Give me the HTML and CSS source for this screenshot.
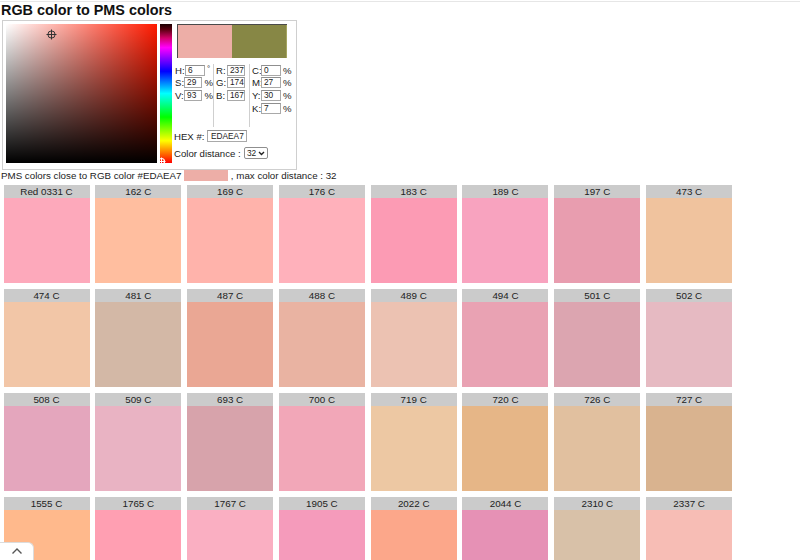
FILE: index.html
```html
<!DOCTYPE html>
<html>
<head>
<meta charset="utf-8">
<link rel="stylesheet" href="styles.css">
</head>
<body>
<div class="page">
  <h1 class="title">RGB color to PMS colors</h1>
  <div class="picker">
    <div class="sv">
      <svg class="cross" width="11" height="11" viewBox="0 0 11 11"><circle cx="5.5" cy="5.5" r="3.6" fill="none" stroke="#333" stroke-width="1"/><path d="M5.5 0.5V10.5M0.5 5.5H10.5" stroke="#333" stroke-width="1"/></svg>
    </div>
    <div class="hue">
      <svg class="huemark" width="9" height="9" viewBox="0 0 9 9"><circle cx="4.5" cy="4.5" r="3" fill="none" stroke="#fff" stroke-width="1.2"/><path d="M4.5 0.5V8.5M0.5 4.5H8.5" stroke="#fff" stroke-width="1"/></svg>
    </div>
    <div class="panel">
      <div class="preview"><div class="cur"></div><div class="old"></div></div>
      <div class="fields">
        <div class="col c1">
          <div class="row"><span class="lab">H:</span><span class="inp w20">6</span><span class="unit deg">°</span></div>
          <div class="row"><span class="lab">S:</span><span class="inp w20">29</span><span class="unit">%</span></div>
          <div class="row"><span class="lab">V:</span><span class="inp w20">93</span><span class="unit">%</span></div>
        </div>
        <div class="col c2">
          <div class="row"><span class="lab">R:</span><span class="inp w18">237</span></div>
          <div class="row"><span class="lab">G:</span><span class="inp w18">174</span></div>
          <div class="row"><span class="lab">B:</span><span class="inp w18">167</span></div>
        </div>
        <div class="col c3">
          <div class="row"><span class="lab l3">C:</span><span class="inp w20">0</span><span class="unit">%</span></div>
          <div class="row"><span class="lab l3">M:</span><span class="inp w20">27</span><span class="unit">%</span></div>
          <div class="row"><span class="lab l3">Y:</span><span class="inp w20">30</span><span class="unit">%</span></div>
          <div class="row"><span class="lab l3">K:</span><span class="inp w20">7</span><span class="unit">%</span></div>
        </div>
      </div>
      <div class="hexrow"><span class="hexlab">HEX #:</span><span class="inp hexinp">EDAEA7</span></div>
      <div class="distrow"><span class="distlab">Color distance :</span><span class="sel">32<svg width="7" height="5" viewBox="0 0 7 5"><path d="M1 1L3.5 3.5L6 1" fill="none" stroke="#222" stroke-width="1.4"/></svg></span></div>
    </div>
  </div>
  <div class="info">PMS colors close to RGB color #EDAEA7 <span class="chip"></span> , max color distance : 32</div>
  <div class="grid">
    <div class="card"><div class="name">Red 0331 C</div><div class="sw" style="background:#FDA9BB"></div></div>
    <div class="card"><div class="name">162 C</div><div class="sw" style="background:#FFBE9F"></div></div>
    <div class="card"><div class="name">169 C</div><div class="sw" style="background:#FFB3AB"></div></div>
    <div class="card"><div class="name">176 C</div><div class="sw" style="background:#FFB1BB"></div></div>
    <div class="card"><div class="name">183 C</div><div class="sw" style="background:#FC9BB4"></div></div>
    <div class="card"><div class="name">189 C</div><div class="sw" style="background:#F8A3BF"></div></div>
    <div class="card"><div class="name">197 C</div><div class="sw" style="background:#E89DAF"></div></div>
    <div class="card"><div class="name">473 C</div><div class="sw" style="background:#F0C39E"></div></div>
    <div class="card"><div class="name">474 C</div><div class="sw" style="background:#F2C6A7"></div></div>
    <div class="card"><div class="name">481 C</div><div class="sw" style="background:#D3B8A6"></div></div>
    <div class="card"><div class="name">487 C</div><div class="sw" style="background:#EAA794"></div></div>
    <div class="card"><div class="name">488 C</div><div class="sw" style="background:#E9B3A2"></div></div>
    <div class="card"><div class="name">489 C</div><div class="sw" style="background:#ECC2B2"></div></div>
    <div class="card"><div class="name">494 C</div><div class="sw" style="background:#E9A2B3"></div></div>
    <div class="card"><div class="name">501 C</div><div class="sw" style="background:#DCA5B0"></div></div>
    <div class="card"><div class="name">502 C</div><div class="sw" style="background:#E6BAC2"></div></div>
    <div class="card"><div class="name">508 C</div><div class="sw" style="background:#E4A6BD"></div></div>
    <div class="card"><div class="name">509 C</div><div class="sw" style="background:#E9B3C3"></div></div>
    <div class="card"><div class="name">693 C</div><div class="sw" style="background:#D7A3AB"></div></div>
    <div class="card"><div class="name">700 C</div><div class="sw" style="background:#F2A7B8"></div></div>
    <div class="card"><div class="name">719 C</div><div class="sw" style="background:#EDC8A3"></div></div>
    <div class="card"><div class="name">720 C</div><div class="sw" style="background:#E6B687"></div></div>
    <div class="card"><div class="name">726 C</div><div class="sw" style="background:#E1C09F"></div></div>
    <div class="card"><div class="name">727 C</div><div class="sw" style="background:#D9B38F"></div></div>
    <div class="card"><div class="name">1555 C</div><div class="sw" style="background:#FFB98C"></div></div>
    <div class="card"><div class="name">1765 C</div><div class="sw" style="background:#FF9FB2"></div></div>
    <div class="card"><div class="name">1767 C</div><div class="sw" style="background:#FAAFC2"></div></div>
    <div class="card"><div class="name">1905 C</div><div class="sw" style="background:#F59BBB"></div></div>
    <div class="card"><div class="name">2022 C</div><div class="sw" style="background:#FCA78A"></div></div>
    <div class="card"><div class="name">2044 C</div><div class="sw" style="background:#E691B5"></div></div>
    <div class="card"><div class="name">2310 C</div><div class="sw" style="background:#D8C1A8"></div></div>
    <div class="card"><div class="name">2337 C</div><div class="sw" style="background:#F7BDB5"></div></div>
  </div>
</div>
<div class="totop"><svg width="12" height="8" viewBox="0 0 12 8"><path d="M1.5 6.5L6 2L10.5 6.5" fill="none" stroke="#555" stroke-width="1.4"/></svg></div>
</body>
</html>
```

FILE: styles.css
```css
html, body {
  margin: 0;
  padding: 0;
  background: #fff;
}
body {
  font-family: "Liberation Sans", Arial, sans-serif;
  font-size: 9.6px;
  color: #222;
  overflow: hidden;
}
.page {
  margin-top: 1px;
  border-top: 1px solid #e6e6e6;
}
.title {
  margin: 0;
  padding-left: 1px;
  height: 18px;
  font-size: 14.4px;
  line-height: 17px;
  font-weight: bold;
  color: #111;
}
.picker {
  display: flex;
  box-sizing: border-box;
  width: 295px;
  height: 150px;
  margin-left: 2px;
  border: 1px solid #cfcfcf;
  padding: 3px 0 0 3px;
}
.sv {
  position: relative;
  width: 151px;
  height: 139px;
  background:
    linear-gradient(to bottom, rgba(0,0,0,0), #000),
    linear-gradient(to right, #fff, rgba(255,255,255,0)),
    #ff1a00;
}
.cross {
  position: absolute;
  left: 40px;
  top: 5px;
}
.hue {
  position: relative;
  width: 12px;
  height: 139px;
  margin-left: 3px;
  background: linear-gradient(to bottom, #1a0000 0%, #5a0010 4%, #d0006a 10%, #ff00ff 17%, #0000ff 34%, #00ffff 50%, #00ff00 67%, #ffff00 84%, #ff0000 100%);
}
.huemark {
  position: absolute;
  left: -3px;
  bottom: -3px;
}
.panel {
  display: flex;
  flex-direction: column;
  margin-left: 2px;
  width: 118px;
}
.preview {
  display: flex;
  box-sizing: border-box;
  width: 110px;
  height: 34px;
  margin-left: 3px;
  border-top: 1px solid #4a4a4a;
  border-left: 1px solid #4a4a4a;
}
.preview .cur { flex: 1; background: #EDAEA7; }
.preview .old { flex: 1; background: #878745; border-right: 1px solid #a5a560; }
.fields {
  display: flex;
  margin-top: 6px;
}
.col {
  display: flex;
  flex-direction: column;
  height: 63px;
  box-sizing: border-box;
}
.c1 { width: 40px; border-right: 1px solid #cfcfcf; }
.c2 { width: 36px; padding-left: 2px; border-right: 1px solid #cfcfcf; }
.c3 { padding-left: 2px; }
.row {
  display: flex;
  align-items: center;
  height: 12.67px;
}
.lab {
  width: 11px;
  padding-left: 1px;
  box-sizing: border-box;
}
.c2 .lab { padding-left: 0; }
.l3 { width: 9px; padding-left: 0; }
.inp {
  display: inline-block;
  box-sizing: border-box;
  height: 11px;
  border: 1px solid #a9a9a9;
  border-top-color: #8f8f8f;
  background: #fff;
  font-size: 8.3px;
  line-height: 9px;
  padding-left: 2px;
  color: #222;
}
.w20 { width: 20px; }
.w18 { width: 18px; }
.unit {
  margin-left: 2px;
  font-size: 9.6px;
}
.deg {
  align-self: flex-start;
  line-height: 9px;
  font-size: 8px;
}
.hexrow {
  display: flex;
  align-items: center;
  margin-top: 3px;
  height: 12px;
}
.hexlab { width: 33px; }
.hexinp {
  width: 40px;
  height: 12px;
  line-height: 10px;
  padding-left: 3px;
}
.distrow {
  display: flex;
  align-items: center;
  margin-top: 5px;
  height: 12px;
}
.distlab { width: 70px; white-space: nowrap; }
.sel {
  display: inline-flex;
  align-items: center;
  box-sizing: border-box;
  width: 24px;
  height: 12px;
  border: 1px solid #8f8f8f;
  border-radius: 2px;
  padding-left: 2px;
  font-size: 8.3px;
  gap: 2px;
}
.info {
  height: 13px;
  line-height: 12px;
  padding-left: 1px;
  white-space: nowrap;
  font-size: 9.75px;
}
.chip {
  display: inline-block;
  width: 44px;
  height: 11px;
  vertical-align: -2px;
  background: #EDAEA7;
}
.grid {
  display: grid;
  grid-template-columns: repeat(8, 86px);
  column-gap: 5.8px;
  row-gap: 6px;
  padding-left: 3.5px;
  margin-top: 2px;
}
.card {
  display: flex;
  flex-direction: column;
}
.name {
  height: 13px;
  line-height: 13px;
  background: #cbcbcb;
  text-align: center;
  color: #222;
  font-size: 9.8px;
}
.sw {
  height: 85px;
}
.totop {
  position: fixed;
  left: 0;
  bottom: 0;
  width: 34px;
  height: 18px;
  box-sizing: border-box;
  background: #fff;
  border-top: 1px solid #dcdcdc;
  border-right: 1px solid #dcdcdc;
  border-top-right-radius: 6px;
  display: flex;
  align-items: center;
  justify-content: center;
  padding-bottom: 2px;
}
```
